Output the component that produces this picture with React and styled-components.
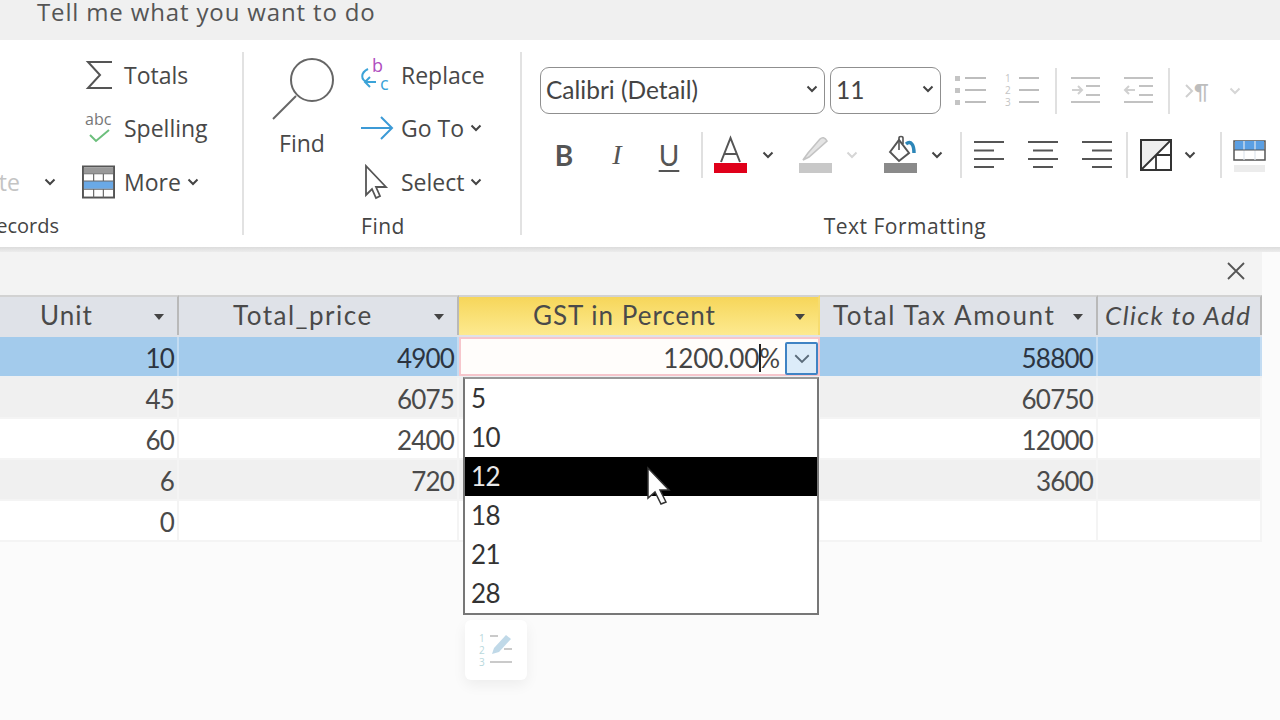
import React from "react";
import styled, { createGlobalStyle } from "styled-components";

const Global = createGlobalStyle`
  html, body {
    margin: 0;
    padding: 0;
    width: 1280px;
    height: 720px;
    overflow: hidden;
    background: #fbfbfb;
  }
  * { box-sizing: border-box; }
`;

const Page = styled.div`
  width: 1280px;
  height: 720px;
  overflow: hidden;
  position: relative;
  font-family: "Open Sans", "Liberation Sans", sans-serif;
  color: #444;
`;

const TellBar = styled.div`
  height: 40px;
  background: #f0f0f0;
  padding-left: 37px;
  font-size: 24px;
  line-height: 24px;
  letter-spacing: 0.85px;
  color: #555;
  white-space: nowrap;
`;

const Ribbon = styled.div`
  height: 207px;
  background: #fff;
  display: flex;
`;

const Group = styled.div`
  width: ${(p) => p.$w}px;
  flex: none;
  display: flex;
  flex-direction: column;
  position: relative;
`;

const GroupBody = styled.div`
  height: 165px;
  flex: none;
  display: flex;
  padding-top: ${(p) => p.$top || 8}px;
  padding-left: ${(p) => p.$left || 0}px;
`;

const GroupLabel = styled.div`
  height: 42px;
  font-size: 21px;
  line-height: 42px;
  letter-spacing: 0.5px;
  color: #444;
  display: flex;
  justify-content: center;
  padding-left: ${(p) => p.$left || 0}px;
`;

const RecordsLabel = styled(GroupLabel)`
  justify-content: flex-start;
  font-size: 20px;
  letter-spacing: 0;
`;

const ClippedText = styled.div`
  width: ${(p) => p.$w}px;
  flex: none;
  overflow: hidden;
  display: flex;
  justify-content: flex-end;
  white-space: nowrap;
  color: ${(p) => p.$color || "#444"};
`;

const GroupRule = styled.div`
  position: absolute;
  right: 0;
  top: 12px;
  bottom: 12px;
  width: 2px;
  background: #e2e2e2;
`;

const Stack = styled.div`
  width: ${(p) => p.$w}px;
  flex: none;
  display: flex;
  flex-direction: column;
`;

const Command = styled.div`
  height: 53.5px;
  flex: none;
  display: flex;
  align-items: center;
  font-size: 23px;
  color: #484848;
  white-space: nowrap;
`;

const CommandIcon = styled.div`
  width: ${(p) => p.$w || 39}px;
  flex: none;
  display: flex;
  align-items: center;
`;

const BigButton = styled.div`
  width: 116px;
  flex: none;
  display: flex;
  flex-direction: column;
  align-items: center;
  gap: 6px;
  font-size: 23px;
  color: #484848;
  padding-top: 9px;
`;

const Chevron = styled.svg`
  width: ${(p) => p.$size || 12}px;
  height: ${(p) => ((p.$size || 12) * 2) / 3}px;
  flex: none;
  margin-left: ${(p) => p.$ml || 0}px;
`;

const FormatRow = styled.div`
  display: flex;
  align-items: center;
  height: ${(p) => p.$h}px;
  margin-top: ${(p) => p.$mt || 0}px;
`;

const Combo = styled.div`
  width: ${(p) => p.$w}px;
  height: 47px;
  flex: none;
  margin-left: ${(p) => p.$ml || 0}px;
  border: 1.5px solid #8f8f8f;
  border-radius: 9px;
  background: #fff;
  display: flex;
  align-items: center;
  justify-content: space-between;
  padding: 0 6px 3px 5px;
  font-family: Lato, "Open Sans", sans-serif;
  font-size: 24.5px;
  color: #444;
`;

const Slot = styled.div`
  width: ${(p) => p.$w}px;
  flex: none;
  margin-left: ${(p) => p.$ml || 0}px;
  display: flex;
  align-items: center;
  justify-content: center;
`;

const Rule = styled.div`
  width: 2px;
  height: ${(p) => p.$h || 46}px;
  flex: none;
  margin-left: ${(p) => p.$ml || 0}px;
  background: #e0e0e0;
`;

const RibbonShadow = styled.div`
  height: 5px;
  background: linear-gradient(#dcdcdc, #ececec);
`;

const Workspace = styled.div`
  width: 1262px;
`;

const CloseBar = styled.div`
  height: 43px;
  background: #f3f3f3;
  display: flex;
  justify-content: flex-end;
  align-items: center;
  padding: 0 16px 6px 0;
`;

const Row = styled.div`
  display: grid;
  grid-template-columns: 179px 280px 361px 278px 164px;
  height: ${(p) => p.$h || 41}px;
  background: ${(p) => p.$bg || "#fff"};
  border-bottom: 2px solid ${(p) => p.$line || "#f4f4f4"};
`;

const HeadCell = styled.div`
  position: relative;
  display: flex;
  align-items: center;
  padding: 0 0 3px ${(p) => p.$pl}px;
  font-family: Lato, "Noto Sans", sans-serif;
  font-size: 26px;
  letter-spacing: ${(p) => p.$ls}px;
  font-style: ${(p) => (p.$add ? "italic" : "normal")};
  white-space: nowrap;
  color: #4a4a4a;
  background: ${(p) => (p.$active ? "linear-gradient(#f6d65a, #fdea90)" : "#dfe2e8")};
  border-top: 2px solid #d2d2d2;
  border-right: 2px solid ${(p) => (p.$active ? "#f6dc70" : "#b9b9b9")};
`;

const SortArrow = styled.span`
  position: absolute;
  right: 13px;
  top: 17px;
  width: 0;
  height: 0;
  border-left: 5px solid transparent;
  border-right: 5px solid transparent;
  border-top: 6px solid #444;
`;

const Cell = styled.div`
  position: relative;
  display: flex;
  align-items: center;
  justify-content: flex-end;
  padding: 2px 3px 0 0;
  font-family: Lato, "Noto Sans", sans-serif;
  font-size: 26px;
  letter-spacing: -0.8px;
  color: ${(p) => (p.$strong ? "#2c3440" : "#4a4a4a")};
  border-right: 2px solid ${(p) => p.$line || "#f4f4f4"};
`;

const EditCell = styled(Cell)`
  background: #fffdfb;
  border: 2px solid #f6c6cc;
  padding-right: 38px;
  letter-spacing: -0.1px;
  color: #444;
`;

const Caret = styled.span`
  position: absolute;
  right: 57px;
  top: 5px;
  bottom: 2px;
  width: 2px;
  background: #222;
`;

const ComboButton = styled.div`
  position: absolute;
  right: 0;
  top: 3px;
  width: 33px;
  height: 33px;
  border: 2px solid #3f83c4;
  border-radius: 2px;
  background: #dcecf9;
  display: flex;
  align-items: center;
  justify-content: center;
`;

const Dropdown = styled.div`
  position: absolute;
  left: 2px;
  top: 38px;
  width: 356px;
  height: 238px;
  background: #fff;
  border: 2px solid #777;
  border-top-color: #999;
  z-index: 2;
`;

const Option = styled.div`
  height: 39px;
  display: flex;
  align-items: center;
  padding: 0 0 2px 6px;
  font-size: 26px;
  letter-spacing: -0.5px;
  color: ${(p) => (p.$hot ? "#e8e8e8" : "#333")};
  background: ${(p) => (p.$hot ? "#000" : "transparent")};
`;

const SmartTag = styled.div`
  position: absolute;
  left: 465px;
  top: 620px;
  width: 62px;
  height: 60px;
  background: #fff;
  border-radius: 6px;
  box-shadow: 0 5px 14px rgba(0, 0, 0, 0.06);
  display: flex;
  align-items: center;
  justify-content: center;
  z-index: 2;
`;

const Pointer = styled.svg`
  position: absolute;
  left: 646px;
  top: 466px;
  width: 25px;
  height: 40px;
  z-index: 3;
`;

const FormatLetter = styled.span`
  font-family: ${(p) => (p.$italic ? '"Liberation Serif"' : "Lato")}, sans-serif;
  font-size: 28px;
  line-height: 30px;
  font-weight: ${(p) => (p.$bold ? 700 : 400)};
  font-style: ${(p) => (p.$italic ? "italic" : "normal")};
  text-decoration: ${(p) => (p.$under ? "underline" : "none")};
  text-decoration-thickness: 1.5px;
  text-underline-offset: 4px;
  color: #555;
`;

const MoreSvg = styled.svg`
  margin-left: -3px;
`;

const Down = ({ color = "#444", ml, thin, size }) => (
  <Chevron viewBox="0 0 12 8" $ml={ml} $size={size}>
    <polyline points="1.5,1.5 6,6 10.5,1.5" fill="none" stroke={color} strokeWidth={thin ? 1.2 : 2} />
  </Chevron>
);

const Sigma = () => (
  <svg width="30" height="32" viewBox="0 0 30 32">
    <path d="M27 3H3L15 16L3 29H27" fill="none" stroke="#555" strokeWidth="2" />
  </svg>
);

const Spelling = () => (
  <svg width="32" height="36" viewBox="0 0 32 36">
    <text x="0" y="15" fontSize="16" fontFamily="Open Sans" fill="#777">abc</text>
    <polyline points="5,25 11,31 24,20" fill="none" stroke="#6cbf7c" strokeWidth="2" />
  </svg>
);

const MoreTable = () => (
  <MoreSvg width="33" height="34" viewBox="0 0 34 34">
    <rect x="1" y="1" width="32" height="32" fill="#fff" stroke="#555" strokeWidth="2" />
    <rect x="2" y="2" width="30" height="6" fill="#999" />
    <rect x="2" y="16" width="30" height="8" fill="#6aa9e6" />
    <path d="M2 8.5H32M2 16H32M2 24.5H32M12 8V16M22 8V16M12 24V33M22 24V33" stroke="#666" strokeWidth="1.2" fill="none" />
  </MoreSvg>
);

const Magnifier = () => (
  <svg width="66" height="64" viewBox="0 0 66 64">
    <circle cx="43" cy="23" r="21" fill="#fff" stroke="#666" strokeWidth="2" />
    <line x1="27" y1="39" x2="4" y2="62" stroke="#666" strokeWidth="2" />
  </svg>
);

const ReplaceIcon = () => (
  <svg width="32" height="36" viewBox="0 0 32 36">
    <text x="12" y="15" fontSize="18" fontFamily="Open Sans" fill="#b04fc0">b</text>
    <text x="20" y="33" fontSize="18" fontFamily="Open Sans" fill="#3ba3d8">c</text>
    <path d="M8 12C0 16 1 23 7 25M16 25H5M10 20L5 25L10 30" fill="none" stroke="#3ba3d8" strokeWidth="2" />
  </svg>
);

const GoToIcon = () => (
  <svg width="34" height="26" viewBox="0 0 34 26">
    <path d="M1 13H32M21 2L32 13L21 24" fill="none" stroke="#3c9ad6" strokeWidth="2" />
  </svg>
);

const SelectIcon = () => (
  <svg width="30" height="36" viewBox="0 0 30 36">
    <path d="M6 2V31L12 25L16 34L20 32L16 23H26Z" fill="#fff" stroke="#555" strokeWidth="1.8" />
  </svg>
);

const BulletList = () => (
  <svg width="32" height="34" viewBox="0 0 32 34">
    <g fill="#c4c4c4">
      <rect x="0" y="2" width="5" height="5" />
      <rect x="0" y="14" width="5" height="5" />
      <rect x="0" y="26" width="5" height="5" />
    </g>
    <path d="M10 4H31M10 16H31M10 28H31" stroke="#bdbdbd" strokeWidth="2" />
  </svg>
);

const NumberList = () => (
  <svg width="34" height="34" viewBox="0 0 34 34">
    <g fill="#c4c4c4" fontSize="10" fontFamily="Open Sans">
      <text x="0" y="8">1</text>
      <text x="0" y="20">2</text>
      <text x="0" y="32">3</text>
    </g>
    <path d="M14 4H34M14 16H34M14 28H34" stroke="#bdbdbd" strokeWidth="2" />
  </svg>
);

const Indent = ({ out }) => (
  <svg width="30" height="34" viewBox="0 0 30 34">
    <path d="M1 4H30M16 12H30M16 21H30M1 28H30" stroke="#c2c2c2" strokeWidth="2" fill="none" />
    <path d={out ? "M12 16H2M6 12L2 16L6 20" : "M2 16H12M8 12L12 16L8 20"} stroke="#d0d0d0" strokeWidth="2" fill="none" />
  </svg>
);

const Pilcrow = () => (
  <svg width="26" height="24" viewBox="0 0 26 24">
    <path d="M1 6L7 12L1 18" fill="none" stroke="#d0d0d0" strokeWidth="2" />
    <text x="9" y="20" fontSize="21" fontFamily="Lato" fill="#bdbdbd">¶</text>
  </svg>
);

const FontColor = () => (
  <svg width="33" height="44" viewBox="0 0 33 44">
    <path d="M7 29L16.5 5L26 29M10 21H23" fill="none" stroke="#555" strokeWidth="2" />
    <rect x="0" y="30" width="33" height="10" fill="#e0001a" />
  </svg>
);

const Highlighter = () => (
  <svg width="33" height="44" viewBox="0 0 33 44">
    <path d="M4 27L10 24L28 8C26 4 23 4 21 6L9 20L4 27Z" fill="#e4e4e4" stroke="#c4c4c4" strokeWidth="1.6" />
    <rect x="0" y="30" width="33" height="10" fill="#c8c8c8" />
  </svg>
);

const FillColor = () => (
  <svg width="33" height="44" viewBox="0 0 33 44">
    <path d="M6 19L15 7L25 20L15 28Z" fill="#fff" stroke="#555" strokeWidth="2" />
    <path d="M15 17V5C15 3 19 3 19 5V11" fill="none" stroke="#555" strokeWidth="1.6" />
    <path d="M22 11C27 7 30 12 30 20" fill="none" stroke="#2d86b8" strokeWidth="3.5" />
    <rect x="0" y="30" width="33" height="10" fill="#8a8a8a" />
  </svg>
);

const alignLines = {
  left: "M1 4H31M1 12.5H21M1 21H31M1 29H21",
  center: "M1 4H31M6 12.5H26M1 21H31M6 29H26",
  right: "M1 4H31M11 12.5H31M1 21H31M11 29H31",
};

const Align = ({ mode }) => (
  <svg width="32" height="34" viewBox="0 0 32 34">
    <path d={alignLines[mode]} stroke="#555" strokeWidth="2" fill="none" />
  </svg>
);

const Gridlines = () => (
  <svg width="32" height="34" viewBox="0 0 32 34">
    <rect x="1" y="2" width="30" height="30" fill="#fff" stroke="#333" strokeWidth="2" />
    <path d="M2 31L30 3H2Z" fill="#efefef" />
    <path d="M1 32L31 2M16 17H31M16 17V32" stroke="#333" strokeWidth="1.8" fill="none" />
  </svg>
);

const AltFill = () => (
  <svg width="33" height="44" viewBox="0 0 33 44">
    <rect x="1" y="32" width="31" height="7" fill="#ececec" />
    <rect x="1" y="8" width="31" height="19" fill="#fff" stroke="#555" strokeWidth="1.5" />
    <rect x="2" y="8" width="29" height="9" fill="#5b9fe3" />
    <path d="M11 8V27M22 8V27" stroke="#dfe6ee" strokeWidth="1.2" />
    <path d="M1 17H32" stroke="#555" strokeWidth="1" />
  </svg>
);

const SmartTagIcon = () => (
  <svg width="36" height="36" viewBox="0 0 36 36">
    <g fill="#b8d8dc" fontSize="10" fontFamily="Open Sans">
      <text x="1" y="10">1</text>
      <text x="1" y="22">2</text>
      <text x="1" y="34">3</text>
    </g>
    <path d="M12 4H20M26 17H34M12 30H34" stroke="#b9b9b9" strokeWidth="1.6" />
    <path d="M14 22L16 16L28 3L33 7L21 20Z" fill="#c0d9e8" />
  </svg>
);

const headers = [
  { name: "Unit", pl: 40, ls: 1 },
  { name: "Total_price", pl: 54, ls: 1.5 },
  { name: "GST in Percent", pl: 74, ls: 1, active: true },
  { name: "Total Tax Amount", pl: 13, ls: 1.6 },
];

const rows = [
  { unit: "45", price: "6075", tax: "60750", bg: "#f0f0f0" },
  { unit: "60", price: "2400", tax: "12000", bg: "#fff" },
  { unit: "6", price: "720", tax: "3600", bg: "#f0f0f0" },
  { unit: "0", price: "", tax: "", bg: "#fff" },
];

const options = ["5", "10", "12", "18", "21", "28"];

export default function App() {
  return (
    <Page>
      <Global />
      <TellBar>Tell me what you want to do</TellBar>
      <Ribbon>
        <Group $w={244}>
          <GroupBody>
            <Stack $w={85}>
              <Command />
              <Command />
              <Command>
                <ClippedText $w={20} $color="#c4c4c4">Delete</ClippedText>
                <Down ml={24} />
              </Command>
            </Stack>
            <Stack $w={150}>
              <Command><CommandIcon><Sigma /></CommandIcon>Totals</Command>
              <Command><CommandIcon><Spelling /></CommandIcon>Spelling</Command>
              <Command><CommandIcon><MoreTable /></CommandIcon>More<Down ml={6} /></Command>
            </Stack>
          </GroupBody>
          <RecordsLabel>
            <ClippedText $w={59}>Records</ClippedText>
          </RecordsLabel>
          <GroupRule />
        </Group>
        <Group $w={278}>
          <GroupBody>
            <BigButton><Magnifier />Find</BigButton>
            <Stack $w={160}>
              <Command><CommandIcon $w={41}><ReplaceIcon /></CommandIcon>Replace</Command>
              <Command><CommandIcon $w={41}><GoToIcon /></CommandIcon>Go To<Down ml={6} /></Command>
              <Command><CommandIcon $w={41}><SelectIcon /></CommandIcon>Select<Down ml={6} /></Command>
            </Stack>
          </GroupBody>
          <GroupLabel>Find</GroupLabel>
          <GroupRule />
        </Group>
        <Group $w={758}>
          <GroupBody $top={27} $left={18}>
            <div>
              <FormatRow $h={47}>
                <Combo $w={285}>Calibri (Detail)<Down /></Combo>
                <Combo $w={111} $ml={5}>11<Down /></Combo>
                <Slot $w={32} $ml={14}><BulletList /></Slot>
                <Slot $w={34} $ml={18}><NumberList /></Slot>
                <Rule $ml={16} />
                <Slot $w={30} $ml={13}><Indent /></Slot>
                <Slot $w={30} $ml={23}><Indent out /></Slot>
                <Rule $ml={15} />
                <Slot $w={26} $ml={15}><Pilcrow /></Slot>
                <Slot $w={20} $ml={14}><Down color="#d6d6d6" /></Slot>
              </FormatRow>
              <FormatRow $h={46} $mt={18}>
                <Slot $w={48}><FormatLetter $bold>B</FormatLetter></Slot>
                <Slot $w={58}><FormatLetter $italic>I</FormatLetter></Slot>
                <Slot $w={46}><FormatLetter $under>U</FormatLetter></Slot>
                <Rule $ml={9} />
                <Slot $w={54}><FontColor /></Slot>
                <Slot $w={22}><Down /></Slot>
                <Slot $w={34} $ml={19}><Highlighter /></Slot>
                <Slot $w={40}><Down color="#d6d6d6" /></Slot>
                <Slot $w={34} $ml={11}><FillColor /></Slot>
                <Slot $w={40}><Down /></Slot>
                <Rule $ml={3} />
                <Slot $w={54}><Align mode="left" /></Slot>
                <Slot $w={54}><Align mode="center" /></Slot>
                <Slot $w={54}><Align mode="right" /></Slot>
                <Rule $ml={2} />
                <Slot $w={32} $ml={12}><Gridlines /></Slot>
                <Slot $w={36}><Down /></Slot>
                <Rule $ml={12} />
                <Slot $w={33} $ml={11}><AltFill /></Slot>
              </FormatRow>
            </div>
          </GroupBody>
          <GroupLabel $left={8}>Text Formatting</GroupLabel>
        </Group>
      </Ribbon>
      <RibbonShadow />
      <Workspace>
        <CloseBar>
          <svg width="20" height="20" viewBox="0 0 20 20">
            <path d="M2 2L18 18M18 2L2 18" stroke="#555" strokeWidth="1.8" />
          </svg>
        </CloseBar>
        <Row $h={42} $line="#dfe2e8">
          {headers.map((h) => (
            <HeadCell key={h.name} $pl={h.pl} $ls={h.ls} $active={h.active}>
              {h.name}
              <SortArrow />
            </HeadCell>
          ))}
          <HeadCell $add $pl={7} $ls={1.4}>Click to Add</HeadCell>
        </Row>
        <Row $bg="#a3cbec" $line="#eef0f2">
          <Cell $strong $line="#c3dcf2">10</Cell>
          <Cell $strong $line="#c3dcf2">4900</Cell>
          <EditCell>
            1200.00%
            <Caret />
            <ComboButton><Down color="#5a6b7a" thin size={18} /></ComboButton>
            <Dropdown>
              {options.map((o) => (
                <Option key={o} $hot={o === "12"}>{o}</Option>
              ))}
            </Dropdown>
          </EditCell>
          <Cell $strong $line="#c3dcf2">58800</Cell>
          <Cell $line="#c3dcf2" />
        </Row>
        {rows.map((r) => (
          <Row key={r.unit} $bg={r.bg}>
            <Cell>{r.unit}</Cell>
            <Cell>{r.price}</Cell>
            <Cell />
            <Cell>{r.tax}</Cell>
            <Cell />
          </Row>
        ))}
      </Workspace>
      <SmartTag><SmartTagIcon /></SmartTag>
      <Pointer viewBox="0 0 25 40">
        <path d="M2 2V32L9 26L15 38L20 36L14 24H23Z" fill="#fff" stroke="#333" strokeWidth="1.5" />
      </Pointer>
    </Page>
  );
}
